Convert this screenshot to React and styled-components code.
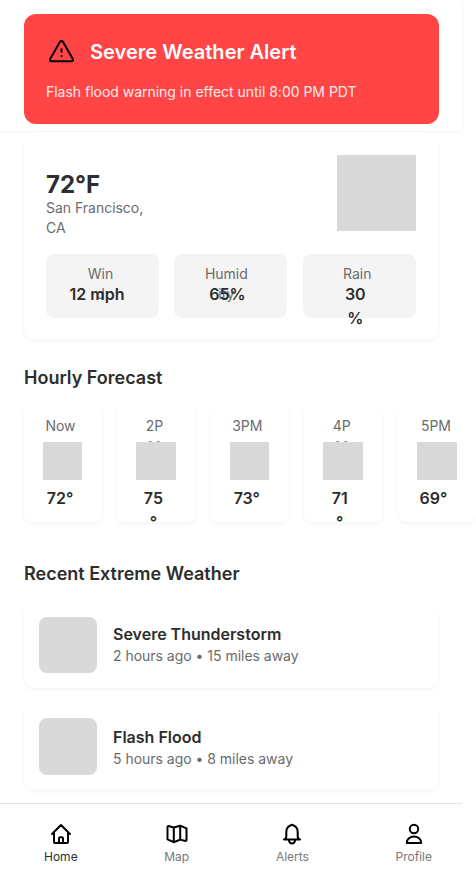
import React from "react";
import styled, { createGlobalStyle } from "styled-components";

const Global = createGlobalStyle`
  *, *::before, *::after { box-sizing: border-box; }
  body { margin: 0; background: #fff; font-family: Inter, sans-serif; color: #2d2d2d; overflow: hidden; }
  h1, h2, h3, p { margin: 0; }
`;

const Screen = styled.div`
  width: 476px;
  height: 879px;
  overflow: hidden;
  display: flex;
  flex-direction: column;
`;

const Header = styled.header`
  width: 462px;
  height: 131px;
  padding: 14px 23px 7px 24px;
  background: #fff;
  box-shadow: 0 1px 3px rgba(0, 0, 0, 0.06);
`;

const Alert = styled.section`
  height: 110px;
  padding: 22px 22px 0;
  border-radius: 12px;
  background: #ff4545;
  color: #fff;
`;

const AlertHead = styled.div`
  display: flex;
  align-items: center;
  gap: 13px;
  height: 32px;
`;

const AlertIcon = styled.svg`
  flex: none;
  width: 31px;
  height: 30px;
`;

const AlertTitle = styled.h1`
  font-size: 20px;
  line-height: 28px;
  font-weight: 600;
  letter-spacing: 0.03px;
`;

const AlertText = styled.p`
  margin-top: 14px;
  font-size: 14px;
  line-height: 20px;
  letter-spacing: -0.02px;
  opacity: 0.9;
`;

const shadow = "0 2px 4px rgba(0, 0, 0, 0.045)";

const Current = styled.section`
  width: 415px;
  height: 208px;
  margin: 1px 0 0 24px;
  padding: 23px 23px 0 22px;
  border-radius: 12px;
  background: #fff;
  box-shadow: ${shadow};
`;

const CurrentTop = styled.div`
  display: flex;
  justify-content: space-between;
  height: 99px;
`;

const Place = styled.div`
  width: 110px;
  padding-top: 17px;
`;

const Temperature = styled.h2`
  font-size: 24px;
  line-height: 26px;
  font-weight: 700;
`;

const Muted = styled.p`
  font-size: 14px;
  line-height: 20px;
  letter-spacing: -0.02px;
  color: #6b6b6b;
`;

const Picture = styled.div`
  width: 79px;
  height: 76px;
  background: #d9d9d9;
`;

const Stats = styled.div`
  display: grid;
  grid-template-columns: 113px 113px 113px;
  column-gap: 15.4px;
`;

const Stat = styled.div`
  height: 64px;
  padding-top: 10px;
  border-radius: 8px;
  background: #f4f4f4;
`;

const NarrowLabel = styled.p`
  width: ${(p) => p.$width}px;
  height: ${(p) => p.$height}px;
  margin-left: ${(p) => p.$left}px;
  font-size: 14px;
  line-height: ${(p) => p.$line}px;
  color: #6b6b6b;
  text-align: center;
  word-break: break-all;
`;

const NarrowValue = styled.p`
  width: ${(p) => p.$width}px;
  margin-left: ${(p) => p.$left}px;
  font-size: 16px;
  line-height: 24px;
  font-weight: 600;
  text-align: center;
  line-break: anywhere;
`;

const SectionTitle = styled.h2`
  margin: ${(p) => p.$top}px 0 0 24px;
  font-size: 18px;
  line-height: 28px;
  font-weight: 600;
`;

const Hours = styled.div`
  display: flex;
  gap: 15px;
  margin: 12px 0 0 24px;
`;

const Hour = styled.div`
  flex: none;
  width: 78.4px;
  height: 118px;
  padding-top: 11px;
  border-radius: 8px;
  background: #fff;
  box-shadow: ${shadow};

  &:last-child {
    margin-left: 0.9px;
  }
`;

const HourPicture = styled.div`
  position: relative;
  width: 39.4px;
  height: 38px;
  margin: 0 0 6px 19px;
  background: #d9d9d9;
`;

const Event = styled.article`
  display: flex;
  gap: 16px;
  width: 415px;
  height: ${(p) => p.$height}px;
  margin: ${(p) => p.$top}px 0 0 24px;
  padding: 15px;
  border-radius: 12px;
  background: #fff;
  box-shadow: ${shadow};
`;

const Thumb = styled.div`
  width: 58px;
  height: ${(p) => p.$height}px;
  border-radius: 8px;
  background: #d9d9d9;
`;

const EventText = styled.div`
  padding-top: ${(p) => p.$top}px;
`;

const EventTitle = styled.h3`
  font-size: 16px;
  line-height: 24px;
  font-weight: 600;
`;

const Nav = styled.nav`
  display: flex;
  width: 462px;
  height: 76px;
  margin-top: 13px;
  padding: 18px 30px 0 44px;
  justify-content: space-between;
  border-top: 1px solid #e5e5e5;
  background: #fff;
`;

const NavItem = styled.a`
  display: flex;
  flex-direction: column;
  align-items: center;
  gap: 2px;
  font-size: 12px;
  line-height: 18px;
  color: ${(p) => (p.$active ? "#2d2d2d" : "#777")};
`;

const Glyph = ({ children }) => (
  <svg width="24" height="24" viewBox="0 0 24 24" fill="none" stroke="#000" strokeWidth="2" strokeLinecap="round" strokeLinejoin="round">
    {children}
  </svg>
);

const stats = [
  { label: "Wind", lw: 29, ll: 40, value: "12 mph", vw: 60, vl: 21 },
  { label: "Humidity", lw: 45, ll: 29.5, value: "65%", vw: 40, vl: 33 },
  { label: "Rain", lw: 36, ll: 36.5, value: "30%", vw: 26, vl: 39.5 },
];

const hours = [
  { time: "Now", lw: 36, ll: 18.5, value: "72°", vw: 32, vl: 20 },
  { time: "2PM", lw: 26, ll: 24, value: "75°", vw: 23, vl: 24.5 },
  { time: "3PM", lw: 36, ll: 18.5, value: "73°", vw: 32, vl: 20 },
  { time: "4PM", lw: 26, ll: 24.5, value: "71°", vw: 21, vl: 25 },
  { time: "5PM", lw: 36, ll: 19.5, value: "69°", vw: 34, vl: 18 },
];

const events = [
  { title: "Severe Thunderstorm", meta: "2 hours ago • 15 miles away", top: 14, height: 86, thumb: 56, text: 5 },
  { title: "Flash Flood", meta: "5 hours ago • 8 miles away", top: 15, height: 87, thumb: 57, text: 7 },
];

const nav = [
  {
    name: "Home",
    active: true,
    icon: <path d="M3 12 12 3l9 9M5 10.300V20.300a.7.7 0 0 0 .7.7h12.600a.7.7 0 0 0 .7-.7V10.300M10 21v-4.500a1.200 1.200 0 0 1 1.200-1.200h1.600a1.200 1.200 0 0 1 1.200 1.200V21" />,
  },
  {
    name: "Map",
    icon: <path d="M8.800 5.500 3.500 4a1 1 0 0 0-1 1v12.300l6.300 2.900 6.400-2.600 5.300 1.400a1 1 0 0 0 1-1V6.300l-6.300-2.600ZM8.800 5.500v14.500M15.200 3.800v13.700" />,
  },
  {
    name: "Alerts",
    icon: <path d="M12 2.800c-3.600 1-5.700 3.700-5.700 7.200v4.500c0 1.400-1 2.500-2.300 3h16c-1.300-.5-2.300-1.600-2.300-3V10c0-3.500-2.100-6.200-5.700-7.200ZM8.900 18c.2 2 1.300 3.500 3.100 3.500s2.900-1.500 3.100-3.500" />,
  },
  {
    name: "Profile",
    icon: (
      <>
        <circle cx="12" cy="7" r="4.200" />
        <path d="M4.800 21c0-3.800 3.200-6.500 7.200-6.500s7.200 2.700 7.200 6.500Z" />
      </>
    ),
  },
];

export default function App() {
  return (
    <Screen>
      <Global />
      <Header>
        <Alert>
          <AlertHead>
            <AlertIcon viewBox="0 0 31 30" fill="none" stroke="#000" strokeWidth="2" strokeLinecap="round" strokeLinejoin="round">
              <path d="M13.900 5 4.300 21.800c-.8 1.500.1 2.400 1.500 2.400h19.400c1.400 0 2.300-.9 1.500-2.400L17.100 5c-.7-1.200-2.500-1.200-3.200 0ZM15.500 12.200v2.500M15.500 19v.1" />
            </AlertIcon>
            <AlertTitle>Severe Weather Alert</AlertTitle>
          </AlertHead>
          <AlertText>Flash flood warning in effect until 8:00 PM PDT</AlertText>
        </Alert>
      </Header>
      <Current>
        <CurrentTop>
          <Place>
            <Temperature>72°F</Temperature>
            <Muted>San Francisco, CA</Muted>
          </Place>
          <Picture />
        </CurrentTop>
        <Stats>
          {stats.map((s) => (
            <Stat key={s.label}>
              <NarrowLabel $width={s.lw} $left={s.ll} $height={18} $line={20}>{s.label}</NarrowLabel>
              <NarrowValue $width={s.vw} $left={s.vl}>{s.value}</NarrowValue>
            </Stat>
          ))}
        </Stats>
      </Current>
      <SectionTitle $top={24}>Hourly Forecast</SectionTitle>
      <Hours>
        {hours.map((h) => (
          <Hour key={h.time}>
            <NarrowLabel $width={h.lw} $left={h.ll} $height={27} $line={21}>{h.time}</NarrowLabel>
            <HourPicture />
            <NarrowValue $width={h.vw} $left={h.vl}>{h.value}</NarrowValue>
          </Hour>
        ))}
      </Hours>
      <SectionTitle $top={38}>Recent Extreme Weather</SectionTitle>
      {events.map((e) => (
        <Event key={e.title} $top={e.top} $height={e.height}>
          <Thumb $height={e.thumb} />
          <EventText $top={e.text}>
            <EventTitle>{e.title}</EventTitle>
            <Muted>{e.meta}</Muted>
          </EventText>
        </Event>
      ))}
      <Nav>
        {nav.map((n) => (
          <NavItem key={n.name} $active={n.active}>
            <Glyph>{n.icon}</Glyph>
            {n.name}
          </NavItem>
        ))}
      </Nav>
    </Screen>
  );
}
